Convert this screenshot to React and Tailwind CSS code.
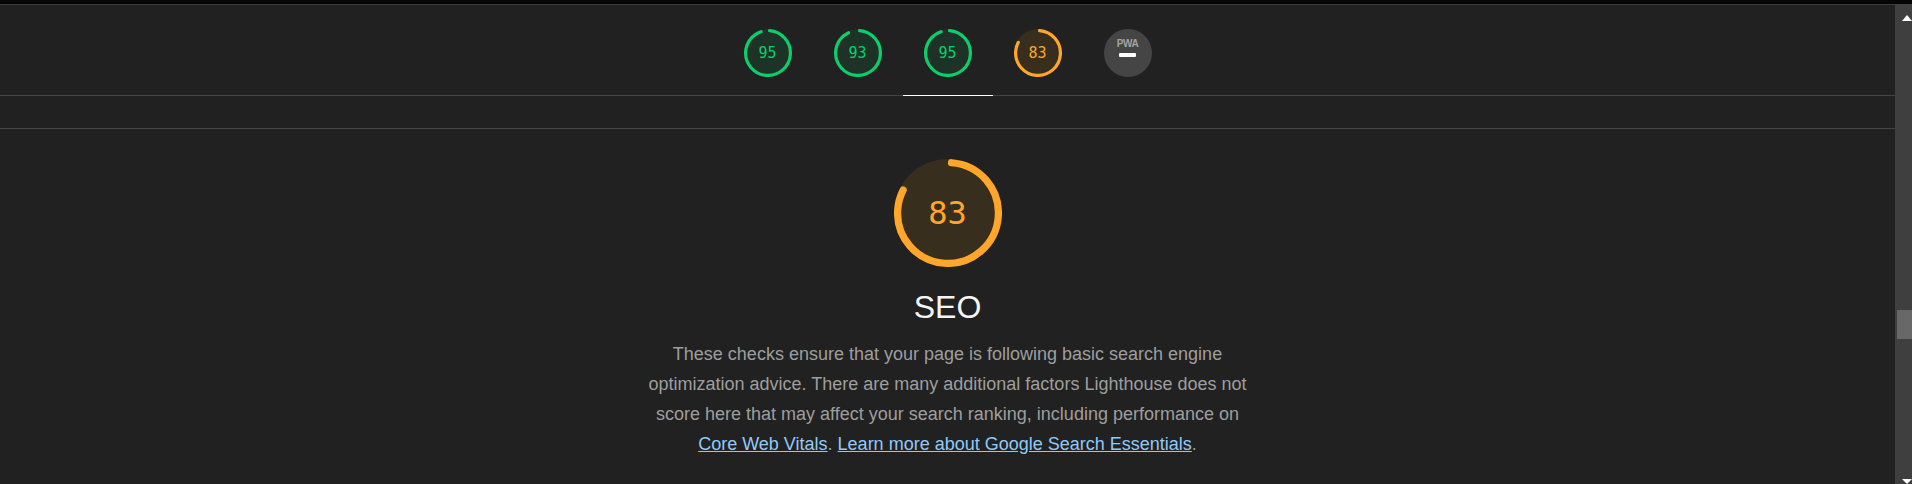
import React from 'react'

const C = 2 * Math.PI * 56

const TABS = [
  { score: 95, tone: 'pass' },
  { score: 93, tone: 'pass' },
  { score: 95, tone: 'pass', active: true },
  { score: 83, tone: 'avg' },
]

const TONES = {
  pass: { stroke: '#0cce6b', fill: 'rgba(12,206,107,0.1)', text: 'text-[#0cce6b]' },
  avg: { stroke: '#ffa62b', fill: 'rgba(255,164,0,0.1)', text: 'text-[#ffa62b]' },
}

function Gauge({ score, tone, size, numClass }) {
  const t = TONES[tone]
  return (
    <div className={`relative flex items-center justify-center ${size}`}>
      <svg viewBox="0 0 120 120" className="absolute inset-0 w-full h-full">
        <circle cx="60" cy="60" r="60" fill={t.fill} />
        <circle
          cx="60"
          cy="60"
          r="56"
          fill="none"
          stroke={t.stroke}
          strokeWidth="8"
          strokeLinecap="round"
          strokeDasharray={`${(score / 100) * C - 6} ${C}`}
          transform="rotate(-86 60 60)"
        />
      </svg>
      <span className={`relative font-['DejaVu_Sans_Mono',monospace] ${numClass} ${t.text}`}>{score}</span>
    </div>
  )
}

function PwaBadge() {
  return (
    <div className="w-[48px] h-[48px] rounded-full bg-[#454545] flex flex-col items-center pt-[10px]">
      <span className="font-['Liberation_Sans',sans-serif] text-[10px] leading-[9px] font-bold text-[#a3a3a3] tracking-[-0.4px]">PWA</span>
      <span className="mt-[5px] w-[17px] h-[3.5px] bg-white rounded-[1px]" />
    </div>
  )
}

function Scrollbar() {
  return (
    <div className="w-[17px] bg-[#3f3f3f] flex flex-col items-end relative">
      <div className="mt-[11px] w-0 h-0 border-l-[5px] border-r-[5px] border-b-[6px] border-l-transparent border-r-transparent border-b-white" />
      <div className="mt-[289px] w-[15px] h-[29px] bg-[#686868]" />
      <div className="mt-auto w-0 h-0 border-l-[5px] border-r-[5px] border-t-[5px] border-l-transparent border-r-transparent border-t-white" />
    </div>
  )
}

export default function App() {
  return (
    <div className="w-[1912px] h-[484px] overflow-hidden bg-[#212121] flex flex-col font-['Liberation_Sans',Arial,sans-serif]">
      <div className="h-[4px] bg-[#050505] shrink-0" />
      <div className="flex flex-1 min-h-0">
        <div className="flex-1 flex flex-col border-t border-[#3a3a3a]">
          <div className="h-[91px] shrink-0 border-b border-[#444] flex justify-center">
            {TABS.map((tab, i) => (
              <div key={i} className="relative w-[90px] flex justify-center pt-[24px]">
                <Gauge score={tab.score} tone={tab.tone} size="w-[48px] h-[48px]" numClass="text-[15px] leading-none" />
                {tab.active && <div className="absolute left-0 right-0 bottom-[-1px] h-[1px] bg-white" />}
              </div>
            ))}
            <div className="w-[90px] flex justify-center pt-[24px]">
              <PwaBadge />
            </div>
          </div>
          <div className="h-[33px] shrink-0 border-b border-[#444]" />
          <div className="flex flex-col items-center pt-[30px]">
            <Gauge score={83} tone="avg" size="w-[108px] h-[108px]" numClass="text-[32px] leading-none" />
            <h2 className="mt-[22px] text-[32px] leading-[36px] text-[#f5f5f5]">SEO</h2>
            <p className="mt-[14px] max-w-[610px] text-center text-[18px] leading-[30px] text-[#9e9e9e]">
              These checks ensure that your page is following basic search engine optimization advice. There are many additional factors Lighthouse does not score here that may affect your search ranking, including performance on{' '}
              <a className="text-[#90caf9] underline">Core Web Vitals</a>.{' '}
              <a className="text-[#90caf9] underline">Learn more about Google Search Essentials</a>.
            </p>
          </div>
        </div>
        <Scrollbar />
      </div>
    </div>
  )
}
